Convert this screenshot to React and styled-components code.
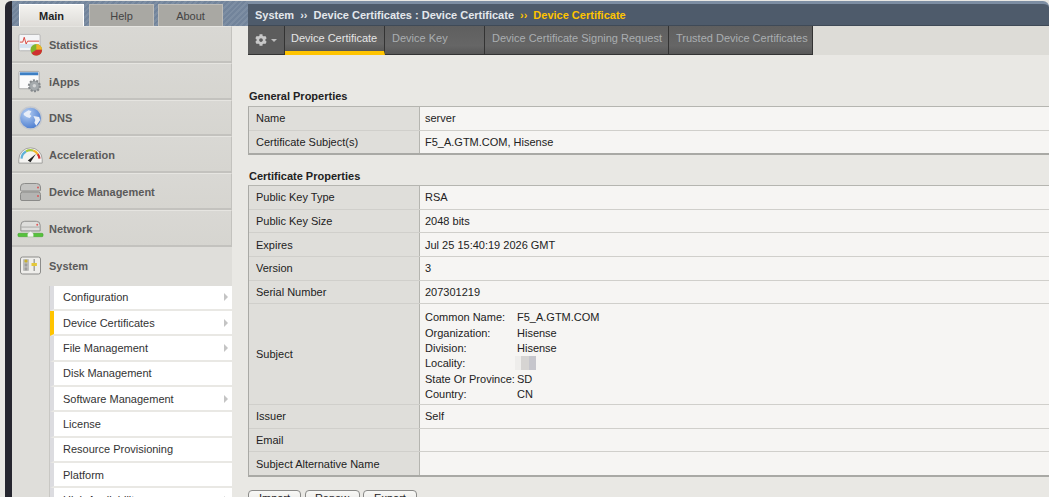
import React from "react";
import styled, { createGlobalStyle } from "styled-components";
import { FaCog } from "react-icons/fa";

const GlobalStyle = createGlobalStyle`
  html, body { margin: 0; padding: 0; background: #e9e8e4; }
  body { font-family: "Liberation Sans", Arial, sans-serif; font-size: 11px; color: #222; }
`;

const Page = styled.div`
  width: 1049px;
  height: 497px;
  overflow: hidden;
  display: flex;
  padding-left: 5px;
  padding-top: 1px;
  box-sizing: border-box;
  background: #e9e8e4;
`;

const Strip = styled.div`
  width: 7px;
  flex: none;
  height: 520px;
  background: #26262f;
  border-top-left-radius: 6px;
`;

const Sidebar = styled.aside`
  width: 236px;
  flex: none;
`;

const Hatch = styled.div`
  height: 25px;
  display: flex;
  align-items: flex-end;
  padding-left: 7px;
  background: repeating-linear-gradient(135deg, #72849b 0 2px, #7d8ea3 2px 4px);
`;

const MainTab = styled.div`
  width: ${(p) => p.$w}px;
  margin-right: ${(p) => p.$gap}px;
  height: 22px;
  box-sizing: border-box;
  display: flex;
  align-items: center;
  justify-content: center;
  font-size: 11px;
  font-weight: ${(p) => (p.$active ? "bold" : "normal")};
  color: ${(p) => (p.$active ? "#222" : "#444")};
  background: ${(p) =>
    p.$active ? "linear-gradient(#f4f3f0, #dedcd8)" : "#a9a8a3"};
  border-top: 1px solid ${(p) => (p.$active ? "#fff" : "#bdbcb8")};
  border-left: 1px solid ${(p) => (p.$active ? "#fff" : "#bdbcb8")};
  border-right: 1px solid ${(p) => (p.$active ? "#fff" : "#bdbcb8")};
`;

const Nav = styled.nav`
  width: 220px;
  background: #dfdeda;
  height: 480px;
`;

const NavItem = styled.div`
  height: 36.8px;
  box-sizing: border-box;
  display: flex;
  align-items: center;
  gap: 5px;
  padding-left: 5px;
  padding-top: 2px;
  font-size: 11px;
  font-weight: bold;
  color: #5a5a5a;
  background: ${(p) => (p.$open ? "#dfdeda" : "linear-gradient(#d9d8d4, #d6d5d0)")};
  border-bottom: ${(p) => (p.$open ? "0" : "2px solid #c3c2be")};
  border-top: ${(p) => (p.$open ? "0" : "1px solid #e6e5e1")};
  border-right: ${(p) => (p.$open ? "0" : "1px solid #c3c2be")};
`;

const IconBox = styled.span`
  width: 27px;
  height: 28px;
  flex: none;
  display: flex;
  align-items: center;
  justify-content: center;
`;

const SubList = styled.ul`
  list-style: none;
  margin: 2px 0 0 37px;
  padding: 0;
  border-left: 1px solid #c9c8c4;
`;

const SubItem = styled.li`
  height: 25.33px;
  box-sizing: border-box;
  display: flex;
  align-items: center;
  justify-content: space-between;
  padding-left: 9px;
  padding-right: 4px;
  font-size: 11px;
  color: #333;
  background: #fff;
  border-left: 4px solid ${(p) => (p.$active ? "#ffc400" : "#dcdce0")};
  border-bottom: 2px solid #e9e8e4;
`;

const Arrow = styled.span`
  width: 0;
  height: 0;
  border-left: 4px solid #c4c4c4;
  border-top: 4px solid transparent;
  border-bottom: 4px solid transparent;
`;

const Main = styled.main`
  flex: 1;
  min-width: 0;
`;

const Crumbs = styled.div`
  height: 25px;
  box-sizing: border-box;
  border-top: 3px solid #7d8ea3;
  border-top-right-radius: 6px;
  background: #4e5b6b;
  border-bottom: 1px solid #3f4a57;
  display: flex;
  align-items: center;
  gap: 6px;
  padding-left: 7px;
  font-size: 11px;
  font-weight: bold;
  color: #e4e8ec;
`;

const Current = styled.span`
  color: #ffc400;
`;

const Toolbar = styled.div`
  height: 29px;
  display: flex;
  background: #dddcd7;
`;

const GearButton = styled.div`
  width: 37px;
  box-sizing: border-box;
  display: flex;
  align-items: center;
  gap: 4px;
  padding-left: 7px;
  color: #c8c8c8;
  background: #5c5c5c;
  border-right: 1px solid #333;
  border-bottom: 1px solid #333;
`;

const Caret = styled.span`
  width: 0;
  height: 0;
  border-top: 3px solid #bbb;
  border-left: 3.5px solid transparent;
  border-right: 3.5px solid transparent;
`;

const Tab = styled.div`
  width: ${(p) => p.$w}px;
  box-sizing: border-box;
  padding: 6px 0 0 ${(p) => (p.$active ? 6 : 7)}px;
  font-size: 11px;
  white-space: nowrap;
  color: ${(p) => (p.$active ? "#e6e6e6" : "#aaaeb1")};
  background: linear-gradient(#5f5f5f, #666 70%, #585858);
  border-right: 1px solid #333;
  border-bottom: ${(p) => (p.$active ? "4px solid #ffc400" : "1px solid #333")};
`;

const Content = styled.section`
  padding-top: 34px;
  background: #e9e8e4;
`;

const Heading = styled.h3`
  margin: 0 0 ${(p) => p.$gap || 0}px;
  height: 15px;
  padding-left: 1px;
  font-size: 11px;
  line-height: 15px;
  font-weight: bold;
  color: #222;
`;

const Table = styled.div`
  border-top: 1px solid #b5b5b0;
  border-bottom: 2px solid #a9a9a5;
  border-left: 1px solid #a9a9a5;
  margin-bottom: ${(p) => p.$mb || 0}px;
`;

const Row = styled.div`
  display: flex;
  min-height: ${(p) => p.$h || 22.6}px;
  border-bottom: 1px solid #d0cfcb;
  &:last-child { border-bottom: 0; }
`;

const Label = styled.div`
  width: 171px;
  flex: none;
  box-sizing: border-box;
  padding-left: 7px;
  display: flex;
  align-items: center;
  font-size: 11px;
  color: #222;
  background: #dfdeda;
  border-right: 1px solid #b5b5b0;
`;

const Value = styled.div`
  flex: 1;
  padding-left: 5px;
  display: flex;
  align-items: center;
  font-size: 11px;
  color: #222;
  background: #f6f5f3;
`;

const SubjectGrid = styled.div`
  display: grid;
  grid-template-columns: 92px auto;
  grid-auto-rows: 15.4px;
  align-items: center;
  padding-top: 3px;
  white-space: nowrap;
`;

const Redacted = styled.span`
  display: block;
  width: 21px;
  height: 14px;
  margin-left: -2px;
  background: linear-gradient(90deg, #eeedeb 0 30%, #d6d4d2 30% 65%, #c6c6cc 65% 100%);
`;

const Buttons = styled.div`
  display: flex;
  gap: 3.5px;
  margin-top: 13px;
`;

const Button = styled.button`
  width: ${(p) => p.$w}px;
  height: 16px;
  padding: 0;
  font: 11px "Liberation Sans", Arial, sans-serif;
  color: #222;
  background: linear-gradient(#f8f8f6, #e6e5e2);
  border: 1px solid #8a8a88;
  border-radius: 4px;
`;

const StatsIcon = () => (
  <svg width="28" height="26" viewBox="0 0 28 26">
    <rect x="2" y="2" width="22" height="17" rx="1.5" fill="#f4f5f7" stroke="#b5b5b5" />
    <rect x="3" y="12" width="20" height="4" fill="#d5e2f0" />
    <path d="M3 10h3l1.5-5 2 7 1.5-3h12" fill="none" stroke="#d8443c" strokeWidth="1" />
    <circle cx="20" cy="18" r="6" fill="#7fb52c" />
    <path d="M20 18V12a6 6 0 0 1 6 6z" fill="#f0b429" />
    <path d="M20 18h6a6 6 0 0 1-11 3.2z" fill="#cf3030" />
  </svg>
);

const AppsIcon = () => (
  <svg width="28" height="26" viewBox="0 0 28 26">
    <rect x="2" y="2" width="21" height="18" rx="1" fill="#fbfbfb" stroke="#a9a9a9" />
    <rect x="3" y="3" width="19" height="3" fill="#3c7fc4" />
    <circle cx="18" cy="17" r="5.5" fill="#9aa0a3" stroke="#85898c" strokeWidth="2.5" strokeDasharray="2 1.4" />
    <circle cx="18" cy="17" r="4.5" fill="#a5aaad" />
    <circle cx="18" cy="17" r="1.8" fill="#d4d6d7" />
  </svg>
);

const GlobeIcon = () => (
  <svg width="28" height="28" viewBox="0 0 28 28">
    <defs>
      <radialGradient id="globe" cx="0.35" cy="0.3" r="0.8">
        <stop offset="0" stopColor="#b6cff2" />
        <stop offset="1" stopColor="#3f73cc" />
      </radialGradient>
    </defs>
    <circle cx="14" cy="14" r="11.5" fill="url(#globe)" stroke="#c6c9ce" strokeWidth="1.5" />
    <path d="M7 9l5-3 3 1-2 3 2 2-2 2-3-1-3-2zM17 12l6 1 1 3-4 6-2-3 1-3z" fill="#e8eef8" />
  </svg>
);

const GaugeIcon = () => (
  <svg width="30" height="24" viewBox="0 0 30 24">
    <path d="M2 21v-4a13 13 0 0 1 26 0v4z" fill="#f5f4f1" stroke="#9a9a98" />
    <path d="M5 16a10 10 0 0 1 5-8" fill="none" stroke="#5fb0d8" strokeWidth="2.5" />
    <path d="M10 8a10 10 0 0 1 8-1" fill="none" stroke="#a6c93e" strokeWidth="2.5" />
    <path d="M18 7a10 10 0 0 1 5 4" fill="none" stroke="#f0b429" strokeWidth="2.5" />
    <path d="M23 11a10 10 0 0 1 2 5" fill="none" stroke="#d22f2f" strokeWidth="2.5" />
    <path d="M12 18l9-7-6 9z" fill="#222" />
  </svg>
);

const DisksIcon = () => (
  <svg width="26" height="24" viewBox="0 0 26 24">
    <path d="M2.5 10V7q0-3.5 4-3.5h12q4 0 4 3.5v3q0 1-1 1h-18q-1 0-1-1z" fill="#c4c4c2" stroke="#8c8c8a" />
    <path d="M2.5 19v-4.500q0-2.500 2-2.500h16q2 0 2 2.500V19q0 1.500-1.500 1.500h-17q-1.500 0-1.500-1.500z" fill="#b4b4b2" stroke="#8a8a88" />
    <circle cx="20" cy="7.500" r="1" fill="#d65a5a" />
    <circle cx="20" cy="16" r="1" fill="#d65a5a" />
  </svg>
);

const NetworkIcon = () => (
  <svg width="28" height="24" viewBox="0 0 28 24">
    <path d="M4 14V8q0-4 4-4h12q4 0 4 4v6z" fill="#dededc" stroke="#8e8e8c" />
    <path d="M4.500 10h19" stroke="#a8a8a6" />
    <circle cx="21" cy="7.500" r="1" fill="#e05555" />
    <rect x="1" y="16.500" width="26" height="3.500" rx="1" fill="#56c23c" stroke="#3c9a2a" strokeWidth="0.5" />
    <path d="M11 20v-3l3-2.500 3 2.500v3z" fill="#f4f4f2" />
  </svg>
);

const SystemIcon = () => (
  <svg width="24" height="22" viewBox="0 0 24 22">
    <rect x="1.500" y="2" width="20" height="17" rx="2" fill="#efeeeb" stroke="#8c8c8a" />
    <rect x="4" y="4" width="6" height="12" rx="1" fill="#bdbdbb" />
    <circle cx="7" cy="6" r="1.600" fill="#c9b02e" />
    <circle cx="7" cy="10" r="1.400" fill="#9d9d9b" />
    <circle cx="7" cy="14" r="1.400" fill="#9d9d9b" />
    <rect x="14.500" y="4" width="1.400" height="12" fill="#9d9d9b" />
    <rect x="12.500" y="8" width="5.400" height="3" fill="#e4c83a" />
  </svg>
);

const navItems = [
  { name: "Statistics", icon: <StatsIcon /> },
  { name: "iApps", icon: <AppsIcon /> },
  { name: "DNS", icon: <GlobeIcon /> },
  { name: "Acceleration", icon: <GaugeIcon /> },
  { name: "Device Management", icon: <DisksIcon /> },
  { name: "Network", icon: <NetworkIcon /> },
  { name: "System", icon: <SystemIcon />, open: true },
];

const subItems = [
  { name: "Configuration", more: true },
  { name: "Device Certificates", more: true, active: true },
  { name: "File Management", more: true },
  { name: "Disk Management" },
  { name: "Software Management", more: true },
  { name: "License" },
  { name: "Resource Provisioning" },
  { name: "Platform" },
  { name: "High Availability", more: true },
];

const tabs = [
  { name: "Device Certificate", w: 100, active: true },
  { name: "Device Key", w: 100 },
  { name: "Device Certificate Signing Request", w: 184 },
  { name: "Trusted Device Certificates", w: 144 },
];

const certRows = [
  ["Public Key Type", "RSA"],
  ["Public Key Size", "2048 bits"],
  ["Expires", "Jul 25 15:40:19 2026 GMT"],
  ["Version", "3"],
  ["Serial Number", "207301219"],
];

const App = () => {
  return (
    <Page>
      <GlobalStyle />
      <Strip />
      <Sidebar>
        <Hatch>
          <MainTab $w={65} $gap={5} $active>Main</MainTab>
          <MainTab $w={65} $gap={4}>Help</MainTab>
          <MainTab $w={65} $gap={0}>About</MainTab>
        </Hatch>
        <Nav>
          {navItems.map((item) => (
            <NavItem key={item.name} $open={item.open}>
              <IconBox>{item.icon}</IconBox>
              {item.name}
            </NavItem>
          ))}
          <SubList>
            {subItems.map((item) => (
              <SubItem key={item.name} $active={item.active}>
                {item.name}
                {item.more && <Arrow />}
              </SubItem>
            ))}
          </SubList>
        </Nav>
      </Sidebar>
      <Main>
        <Crumbs>
          <span>System</span>
          <span>››</span>
          <span>Device Certificates : Device Certificate</span>
          <Current>››</Current>
          <Current>Device Certificate</Current>
        </Crumbs>
        <Toolbar>
          <GearButton>
            <FaCog size={12} />
            <Caret />
          </GearButton>
          {tabs.map((tab) => (
            <Tab key={tab.name} $w={tab.w} $active={tab.active}>{tab.name}</Tab>
          ))}
        </Toolbar>
        <Content>
          <Heading $gap={2}>General Properties</Heading>
          <Table $mb={14}>
            <Row>
              <Label>Name</Label>
              <Value>server</Value>
            </Row>
            <Row>
              <Label>Certificate Subject(s)</Label>
              <Value>F5_A.GTM.COM, Hisense</Value>
            </Row>
          </Table>
          <Heading $gap={1}>Certificate Properties</Heading>
          <Table>
            {certRows.map(([label, value]) => (
              <Row key={label}>
                <Label>{label}</Label>
                <Value>{value}</Value>
              </Row>
            ))}
            <Row $h={100}>
              <Label>Subject</Label>
              <Value>
                <SubjectGrid>
                  <span>Common Name:</span><span>F5_A.GTM.COM</span>
                  <span>Organization:</span><span>Hisense</span>
                  <span>Division:</span><span>Hisense</span>
                  <span>Locality:</span><Redacted />
                  <span>State Or Province:</span><span>SD</span>
                  <span>Country:</span><span>CN</span>
                </SubjectGrid>
              </Value>
            </Row>
            <Row>
              <Label>Issuer</Label>
              <Value>Self</Value>
            </Row>
            <Row>
              <Label>Email</Label>
              <Value />
            </Row>
            <Row>
              <Label>Subject Alternative Name</Label>
              <Value />
            </Row>
          </Table>
          <Buttons>
            <Button $w={53}>Import</Button>
            <Button $w={55}>Renew</Button>
            <Button $w={54}>Export</Button>
          </Buttons>
        </Content>
      </Main>
    </Page>
  );
};

export default App;
